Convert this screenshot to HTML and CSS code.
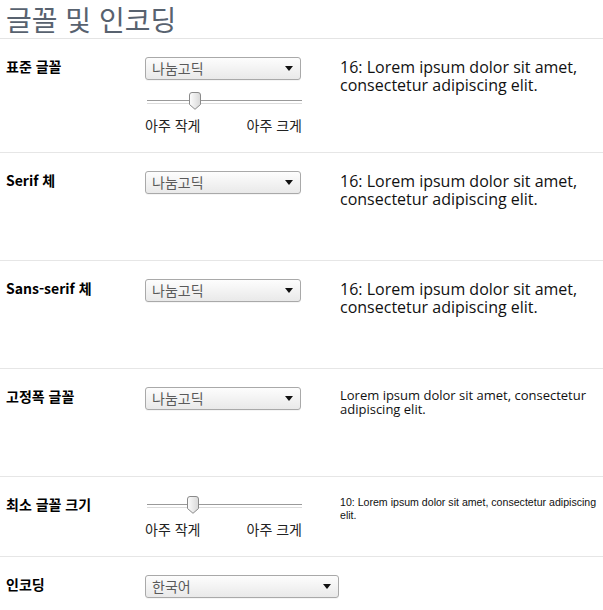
FILE: index.html
```html
<!DOCTYPE html>
<html lang="ko">
<head>
<meta charset="utf-8">
<title>글꼴 및 인코딩</title>
<link rel="stylesheet" href="styles.css">
</head>
<body>
<div class="page">
  <h1 class="title">글꼴 및 인코딩</h1>

  <div class="row row-std">
    <div class="label">표준 글꼴</div>
    <div class="controls">
      <div class="select"><span class="select-text">나눔고딕</span><svg class="arrow" width="8" height="5" viewBox="0 0 8 5"><path d="M0 0H8L4 5Z" fill="#111"/></svg></div>
      <div class="slider">
        <div class="track"><div class="thumb" style="left:42px"><svg width="12" height="18" viewBox="0 0 12 18"><path d="M0.5 3Q0.5 0.5 3 0.5H9Q11.5 0.5 11.5 3V12.5L6 17.3L0.5 12.5Z" fill="url(#g1)" stroke="#8a8a8a"/><defs><linearGradient id="g1" x1="0" x2="1" y1="0" y2="0"><stop offset="0" stop-color="#fdfdfd"/><stop offset="1" stop-color="#d8d8d8"/></linearGradient></defs></svg></div></div>
        <div class="slider-labels"><span>아주 작게</span><span>아주 크게</span></div>
      </div>
    </div>
    <div class="sample s16">16: Lorem ipsum dolor sit amet, consectetur adipiscing elit.</div>
  </div>

  <div class="row row-mid">
    <div class="label">Serif 체</div>
    <div class="controls">
      <div class="select"><span class="select-text">나눔고딕</span><svg class="arrow" width="8" height="5" viewBox="0 0 8 5"><path d="M0 0H8L4 5Z" fill="#111"/></svg></div>
    </div>
    <div class="sample s16">16: Lorem ipsum dolor sit amet, consectetur adipiscing elit.</div>
  </div>

  <div class="row row-mid">
    <div class="label">Sans-serif 체</div>
    <div class="controls">
      <div class="select"><span class="select-text">나눔고딕</span><svg class="arrow" width="8" height="5" viewBox="0 0 8 5"><path d="M0 0H8L4 5Z" fill="#111"/></svg></div>
    </div>
    <div class="sample s16">16: Lorem ipsum dolor sit amet, consectetur adipiscing elit.</div>
  </div>

  <div class="row row-mid">
    <div class="label">고정폭 글꼴</div>
    <div class="controls">
      <div class="select"><span class="select-text">나눔고딕</span><svg class="arrow" width="8" height="5" viewBox="0 0 8 5"><path d="M0 0H8L4 5Z" fill="#111"/></svg></div>
    </div>
    <div class="sample s13">Lorem ipsum dolor sit amet, consectetur adipiscing elit.</div>
  </div>

  <div class="row row-min">
    <div class="label">최소 글꼴 크기</div>
    <div class="controls">
      <div class="slider slider-top">
        <div class="track"><div class="thumb" style="left:40px"><svg width="12" height="18" viewBox="0 0 12 18"><path d="M0.5 3Q0.5 0.5 3 0.5H9Q11.5 0.5 11.5 3V12.5L6 17.3L0.5 12.5Z" fill="url(#g2)" stroke="#8a8a8a"/><defs><linearGradient id="g2" x1="0" x2="1" y1="0" y2="0"><stop offset="0" stop-color="#fdfdfd"/><stop offset="1" stop-color="#d8d8d8"/></linearGradient></defs></svg></div></div>
        <div class="slider-labels"><span>아주 작게</span><span>아주 크게</span></div>
      </div>
    </div>
    <div class="sample s10">10: Lorem ipsum dolor sit amet, consectetur adipiscing elit.</div>
  </div>

  <div class="row row-last">
    <div class="label">인코딩</div>
    <div class="controls">
      <div class="select select-wide"><span class="select-text">한국어</span><svg class="arrow" width="8" height="5" viewBox="0 0 8 5"><path d="M0 0H8L4 5Z" fill="#111"/></svg></div>
    </div>
  </div>
</div>
</body>
</html>
```
FILE: styles.css
```css
* { box-sizing: border-box; }
html, body { margin: 0; padding: 0; background: #fff; }
body {
  font-family: "Noto Sans CJK KR", "Noto Sans", sans-serif;
  color: #000;
  width: 603px;
  height: 610px;
  overflow: hidden;
}
.title {
  margin: 0;
  padding: 0 0 0 6px;
  height: 39px;
  font-size: 28px;
  line-height: 38px;
  font-weight: 400;
  color: #58626f;
  border-bottom: 1px solid #e4e4e4;
}
.row {
  display: grid;
  grid-template-columns: 139px 195px 1fr;
  align-items: start;
  padding: 18px 0 0 6px;
  border-bottom: 1px solid #e6e6e6;
}
.row-std { height: 114px; }
.row-mid { height: 108px; }
.row-min { height: 80px; }
.row-last { border-bottom: none; height: 54px; }
.label {
  font-size: 14px;
  font-weight: 700;
  line-height: 16px;
  padding-top: 1px;
}
.controls { display: flex; flex-direction: column; }
.select {
  width: 156px;
  height: 23px;
  border: 1px solid #a9a9a9;
  border-radius: 3px;
  background: linear-gradient(#fdfdfd, #e9e9e9);
  display: flex;
  align-items: center;
  justify-content: space-between;
  padding: 0 7px 0 6px;
  box-shadow: 0 1px 0 rgba(0,0,0,0.04);
}
.select-wide { width: 194px; }
.select-text { font-size: 14px; color: #5a5a5a; line-height: 21px; }
.arrow { display: block; }
.slider { width: 157px; margin-top: 13px; }
.slider-top { margin-top: 2px; }
.track {
  position: relative;
  height: 17px;
  margin-left: 2px;
}
.track::before {
  content: "";
  display: block;
  position: absolute;
  left: 0; right: 0;
  top: 7px;
  height: 2px;
  border-top: 1px solid #9a9a9a;
  border-bottom: 1px solid #dcdcdc;
}
.thumb { position: absolute; top: -1px; width: 12px; height: 18px; }
.thumb svg { display: block; }
.slider-labels {
  display: flex;
  justify-content: space-between;
  font-size: 14px;
  line-height: 18px;
  color: #222;
  margin-top: 6px;
}
.sample { padding-top: 1px; color: #111; }
.s16 { font-family: "Open Sans", "Noto Sans", sans-serif; font-size: 16px; line-height: 18px; }
.s13 { font-family: "Open Sans", "Noto Sans", sans-serif; font-size: 13px; line-height: 14px; }
.s10 { font-family: "Liberation Sans", Arial, sans-serif; font-size: 10.6px; line-height: 13px; }
```
